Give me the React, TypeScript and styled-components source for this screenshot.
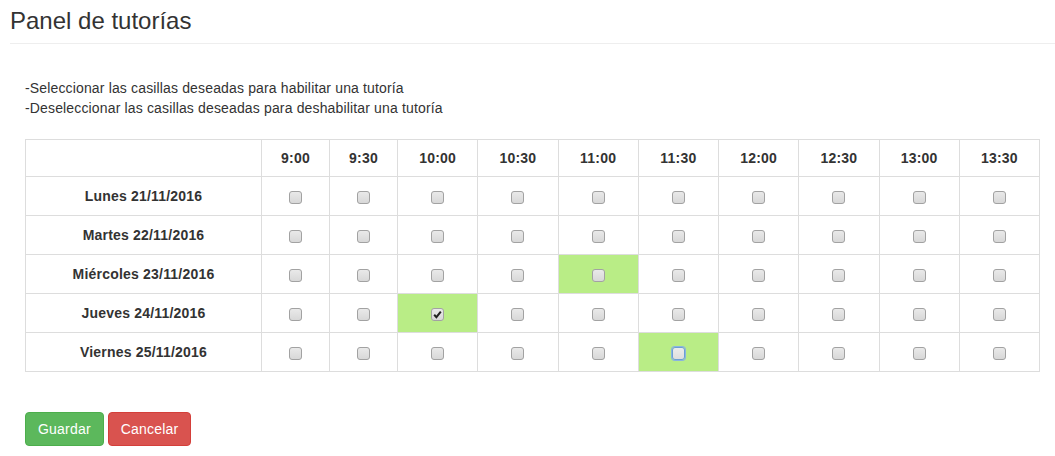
import React from 'react'
import styled, { createGlobalStyle, css } from 'styled-components'

const GlobalStyle = createGlobalStyle`
  body {
    margin: 0;
    background: #fff;
    font-family: "Liberation Sans", Arial, Helvetica, sans-serif;
    font-size: 14px;
    line-height: 20px;
    color: #333;
  }
`

const slots = ['9:00', '9:30', '10:00', '10:30', '11:00', '11:30', '12:00', '12:30', '13:00', '13:30']

const days = [
  'Lunes 21/11/2016',
  'Martes 22/11/2016',
  'Miércoles 23/11/2016',
  'Jueves 24/11/2016',
  'Viernes 25/11/2016',
]

// enabled cells: [day, slot]
const enabled: Record<string, { checked?: boolean; focused?: boolean }> = {
  '2-4': {},
  '3-2': { checked: true },
  '4-5': { focused: true },
}

interface CheckProps {
  checked?: boolean
  focused?: boolean
}

const Check: React.FC<CheckProps> = ({ checked, focused }) => {
  return (
    <CheckWrap>
      <CheckBox type="checkbox" defaultChecked={checked} $focused={focused} />
      {checked && (
        <CheckMark viewBox="0 0 13 13" width="13" height="13">
          <path d="M3.2 6.8 L5.4 9.2 L9.8 3.6" fill="none" stroke="#222" strokeWidth="2" />
        </CheckMark>
      )}
    </CheckWrap>
  )
}

const App: React.FC = () => {
  return (
    <Page>
      <GlobalStyle />
      <Header>
        <Title>Panel de tutorías</Title>
      </Header>
      <Content>
        <Instructions>
          <p>-Seleccionar las casillas deseadas para habilitar una tutoría</p>
          <p>-Deseleccionar las casillas deseadas para deshabilitar una tutoría</p>
        </Instructions>
        <Table>
          <colgroup>
            <col style={{ width: 236 }} />
            <col style={{ width: 68 }} />
            <col style={{ width: 68 }} />
            {slots.slice(2).map((s) => (
              <col key={s} />
            ))}
          </colgroup>
          <thead>
            <tr>
              <HeadCell />
              {slots.map((s) => (
                <HeadCell key={s}>{s}</HeadCell>
              ))}
            </tr>
          </thead>
          <tbody>
            {days.map((d, di) => (
              <tr key={d}>
                <DayCell>{d}</DayCell>
                {slots.map((s, si) => {
                  const cell = enabled[`${di}-${si}`]
                  return (
                    <SlotCell key={s} $active={!!cell}>
                      <Check checked={cell?.checked} focused={cell?.focused} />
                    </SlotCell>
                  )
                })}
              </tr>
            ))}
          </tbody>
        </Table>
        <Actions>
          <Button $variant="success">Guardar</Button>
          <Button $variant="danger">Cancelar</Button>
        </Actions>
      </Content>
    </Page>
  )
}

export default App

const Page = styled.div`
  padding-left: 10px;
`

const Header = styled.div`
  border-bottom: 1px solid #eee;
  padding-bottom: 9px;
`

const Title = styled.h3`
  margin: 8px 0 0;
  font-size: 24px;
  font-weight: 500;
  line-height: 26px;
  color: #333;
`

const Content = styled.div`
  padding: 0 15px;
`

const Instructions = styled.div`
  margin-top: 34px;
  letter-spacing: 0.15px;

  p {
    margin: 0;
  }
`

const Table = styled.table`
  width: 1015px;
  margin-top: 21px;
  border-collapse: collapse;
  border-spacing: 0;
  table-layout: fixed;
  border: 1px solid #ddd;
`

const HeadCell = styled.th`
  height: 37px;
  padding: 0 8px;
  border: 1px solid #ddd;
  font-weight: bold;
  letter-spacing: 0.2px;
  text-align: center;
  vertical-align: middle;
  box-sizing: border-box;
`

const DayCell = styled.th`
  height: 39px;
  padding: 0 8px;
  border: 1px solid #ddd;
  font-weight: bold;
  letter-spacing: 0.2px;
  text-align: center;
  vertical-align: middle;
  box-sizing: border-box;
`

const SlotCell = styled.td<{ $active?: boolean }>`
  height: 39px;
  padding: 0;
  border: 1px solid #ddd;
  text-align: center;
  vertical-align: middle;
  box-sizing: border-box;
  background: ${(p) => (p.$active ? '#b9ed86' : '#fff')};
`

const CheckWrap = styled.span`
  position: relative;
  display: inline-block;
  width: 13px;
  height: 13px;
  vertical-align: middle;
`

const CheckBox = styled.input<{ $focused?: boolean }>`
  appearance: none;
  display: block;
  margin: 0;
  width: 13px;
  height: 13px;
  box-sizing: border-box;
  border: 1px solid #a2a2a2;
  border-radius: 3px;
  background: linear-gradient(#e9e9e9, #d8d8d8);
  outline: none;

  ${(p) =>
    p.$focused &&
    css`
      border-color: #6a9fd4;
      box-shadow: 0 0 0 1px #8ab4e0;
      background: linear-gradient(#ececec, #dedede);
    `}
`

const CheckMark = styled.svg`
  position: absolute;
  left: 0;
  top: 0;
  pointer-events: none;
`

const Actions = styled.div`
  display: flex;
  gap: 4px;
  margin-top: 40px;
`

const Button = styled.button<{ $variant: 'success' | 'danger' }>`
  font-family: inherit;
  font-size: 14px;
  line-height: 20px;
  letter-spacing: 0.2px;
  padding: 6px 12px;
  border-radius: 4px;
  color: #fff;
  cursor: pointer;
  border: 1px solid ${(p) => (p.$variant === 'success' ? '#4cae4c' : '#d43f3a')};
  background: ${(p) => (p.$variant === 'success' ? '#5cb85c' : '#d9534f')};
`
